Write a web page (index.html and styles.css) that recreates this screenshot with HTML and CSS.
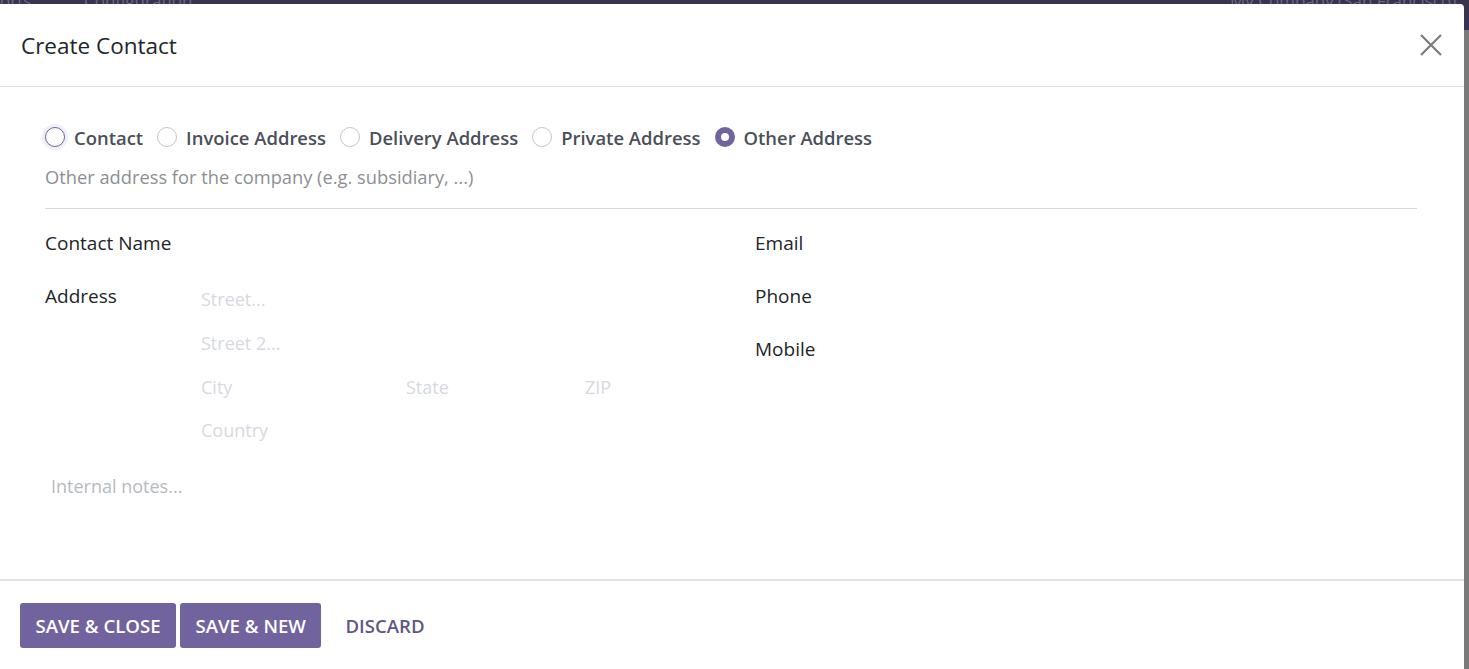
FILE: index.html
```html
<!DOCTYPE html>
<html>
<head>
<meta charset="utf-8">
<link rel="stylesheet" href="styles.css">
</head>
<body>
<div class="backdrop">
  <div class="topbar">
    <span class="nav-a">orts</span><span class="nav-b">Configuration</span>
    <span class="nav-c">My Company (San Francisco)</span>
  </div>
</div>
<div class="modal">
  <header class="modal-header">
    <h1 class="title">Create Contact</h1>
    <button class="close" aria-label="Close">
      <svg width="22" height="22" viewBox="0 0 22 22"><path d="M1 1L21 21M21 1L1 21" stroke="#7b7b7b" stroke-width="2.2" fill="none"/></svg>
    </button>
  </header>
  <main class="modal-body">
    <div class="radios">
      <label class="radio"><span class="circle focus"></span>Contact</label>
      <label class="radio"><span class="circle"></span>Invoice Address</label>
      <label class="radio"><span class="circle"></span>Delivery Address</label>
      <label class="radio"><span class="circle"></span>Private Address</label>
      <label class="radio"><span class="circle checked"></span>Other Address</label>
    </div>
    <p class="desc">Other address for the company (e.g. subsidiary, ...)</p>
    <div class="sep"></div>
    <div class="group">
      <div class="col-left">
        <div class="row"><div class="label">Contact Name</div><div class="value"></div></div>
        <div class="row addr-row">
          <div class="label">Address</div>
          <div class="addr">
            <div class="ph ph-line">Street...</div>
            <div class="ph ph-line">Street 2...</div>
            <div class="ph-city">
              <span class="ph city">City</span><span class="ph state">State</span><span class="ph zip">ZIP</span>
            </div>
            <div class="ph ph-line">Country</div>
          </div>
        </div>
      </div>
      <div class="col-right">
        <div class="row"><div class="label">Email</div></div>
        <div class="row"><div class="label">Phone</div></div>
        <div class="row"><div class="label">Mobile</div></div>
      </div>
    </div>
    <div class="notes">Internal notes...</div>
  </main>
  <footer class="modal-footer">
    <button class="btn primary">SAVE &amp; CLOSE</button>
    <button class="btn primary">SAVE &amp; NEW</button>
    <button class="btn link">DISCARD</button>
  </footer>
</div>
</body>
</html>
```
FILE: styles.css
```css
* { box-sizing: border-box; }
html, body { margin: 0; padding: 0; height: 100%; overflow: hidden; }
body {
  font-family: "Open Sans", "Noto Sans", sans-serif;
  background: #7a7a7a;
  position: relative;
}
.backdrop { position: absolute; inset: 0; }
.topbar {
  height: 30px;
  background: #3a3350;
  color: #6d6780;
  font-size: 17px;
  line-height: 10px;
  position: relative;
}
.nav-a { position: absolute; left: 0; top: -4px; }
.nav-b { position: absolute; left: 84px; top: -4px; }
.nav-c { position: absolute; left: 1230px; top: -4px; }

.modal {
  position: absolute;
  top: 4px;
  left: 0;
  width: 1464px;
  bottom: 0;
  background: #fff;
  border-top-right-radius: 4px;
  display: flex;
  flex-direction: column;
}
.modal-header {
  height: 83px;
  border-bottom: 1px solid #dee2e6;
  display: flex;
  align-items: center;
  justify-content: space-between;
  padding: 0 22px 0 21px;
}
.title {
  margin: 0;
  font-size: 22.5px;
  font-weight: 500;
  color: #212529;
}
.close {
  border: 0;
  background: none;
  padding: 0;
  width: 22px;
  height: 22px;
  display: flex;
}
.modal-body {
  flex: 1;
  padding: 36px 47px 0 45px;
}
.radios {
  display: flex;
  align-items: center;
  height: 28px;
}
.radio {
  display: flex;
  align-items: center;
  gap: 9px;
  font-size: 18.45px;
  font-weight: 600;
  color: #4a4f59;
  margin-right: 14px;
}
.circle {
  width: 20px;
  height: 20px;
  border-radius: 50%;
  border: 1px solid #c4c6ca;
  background: #fff;
  display: inline-block;
  flex: none;
}
.circle.focus {
  border-color: #71639e;
  box-shadow: 0 0 0 3px #f1eff6;
}
.circle.checked {
  border: 6px solid #71639e;
  background: #fff;
}
.desc {
  margin: 13px 0 0;
  font-size: 18.3px;
  color: #8c8f94;
  line-height: 26px;
}
.sep {
  height: 1px;
  background: #d8d8d8;
  margin-top: 18px;
}
.group {
  display: grid;
  grid-template-columns: 710px 1fr;
  margin-top: 20px;
}
.row {
  display: flex;
  min-height: 53px;
}
.label {
  width: 156px;
  font-size: 19px;
  font-weight: 500;
  color: #212529;
  line-height: 28px;
}
.addr { display: flex; flex-direction: column; padding-top: 3px; }
.ph {
  color: #d6d9df;
  font-size: 18px;
  line-height: 28px;
}
.ph-line { height: 44px; }
.ph-city { display: flex; height: 43px; }
.city { width: 205px; }
.state { width: 179px; }
.notes {
  margin: 12px 0 0 6px;
  font-size: 18px;
  color: #b7babf;
  line-height: 28px;
}
.modal-footer {
  height: 90px;
  border-top: 2px solid #dee2e6;
  display: flex;
  align-items: center;
  padding: 0 20px 0 20px;
  gap: 4px;
}
.btn {
  font-family: inherit;
  font-size: 18.6px;
  font-weight: 600;
  height: 45px;
  border-radius: 3px;
  border: 0;
  padding: 0 15.5px;
  margin-top: 0;
}
.primary { background: #71639e; color: #fff; }
.link { background: none; color: #5f5586; padding: 0 20px; }
```
